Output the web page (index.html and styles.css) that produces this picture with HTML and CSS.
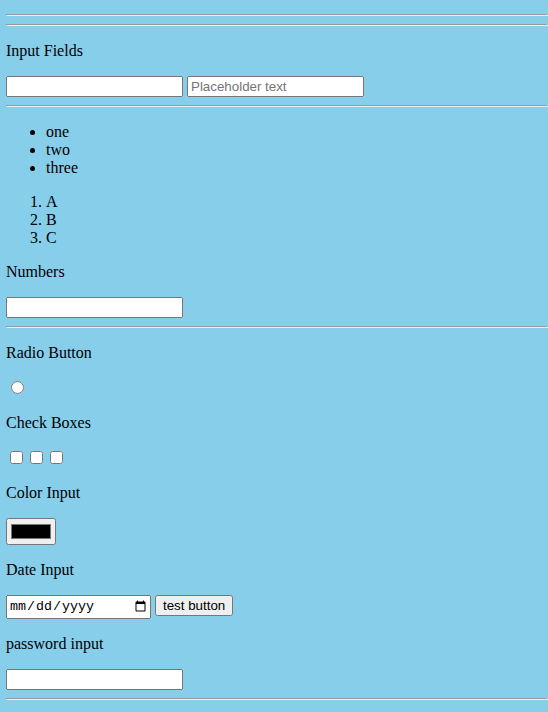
FILE: index.html
```html
<!DOCTYPE html>
<html>
<head>
<meta charset="utf-8">
<link rel="stylesheet" href="styles.css">
</head>
<body class="page">
<hr class="rule">
<hr class="rule">
<p class="label">Input Fields</p>
<input class="field" type="text">
<input class="field" type="text" placeholder="Placeholder text">
<hr class="rule">
<ul class="list">
  <li>one</li>
  <li>two</li>
  <li>three</li>
</ul>
<ol class="list">
  <li>A</li>
  <li>B</li>
  <li>C</li>
</ol>
<p class="label">Numbers</p>
<input class="field" type="number">
<hr class="rule">
<p class="label">Radio Button</p>
<input class="radio" type="radio">
<p class="label">Check Boxes</p>
<input class="check" type="checkbox"><input class="check" type="checkbox"><input class="check" type="checkbox">
<p class="label">Color Input</p>
<input class="color" type="color">
<p class="label">Date Input</p>
<input class="date" type="date">
<button class="btn">test button</button>
<p class="label">password input</p>
<input class="field" type="password">
<hr class="rule">
</body>
</html>
```
FILE: styles.css
```css
html {
  background: #87ceeb;
}
.page {
  margin: 0;
  padding: 6px 0 0 6px;
  background: #87ceeb;
  font-family: "Liberation Serif", serif;
  font-size: 16px;
}
.field, .btn {
  font-family: "Liberation Sans", Arial, sans-serif;
  font-size: 13.3333px;
}
.field {
  box-sizing: border-box;
  width: 177px;
  height: 21px;
}
.date {
  box-sizing: border-box;
  width: 145px;
  height: 24px;
  font-family: "Liberation Mono", "Courier New", monospace;
  font-size: 13.3333px;
}
.btn {
  white-space: nowrap;
  padding: 1px 6px;
}
```
